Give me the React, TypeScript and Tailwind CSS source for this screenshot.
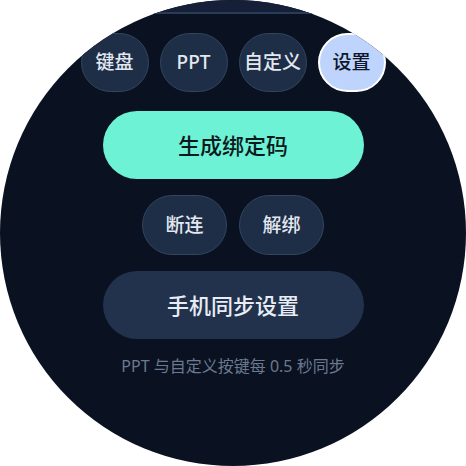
import React from "react";

const tabs = ["键盘", "PPT", "自定义", "设置"];

export default function App() {
  const active = "设置";
  return (
    <div className="w-[466px] h-[466px] bg-white" style={{ fontFamily: '"Noto Sans", "Noto Sans CJK SC", sans-serif' }}>
      <div className="w-full h-full rounded-full overflow-hidden bg-[#0a1120] flex flex-col items-center">
        {/* header scrolled off */}
        <div className="w-full h-[14px] shrink-0 bg-[#152038] border-b-2 border-[#2a3b57]" />

        <div className="mt-[19px] flex gap-[11px]">
          {tabs.map((t) => (
            <button
              key={t}
              className={`w-[68px] h-[59px] rounded-full flex items-center justify-center text-[19px] font-medium ${
                t === active
                  ? "bg-[#bfd4fd] text-[#0f172a] border-2 border-white"
                  : "bg-[#1f2e47] text-[#e2e8f0] border border-[#33455f]"
              }`}
            >
              {t}
            </button>
          ))}
        </div>

        <button className="mt-[19px] w-[261px] h-[68px] rounded-full bg-[#6ef2d5] text-[#0b1a1c] text-[22px] font-medium flex items-center justify-center">
          生成绑定码
        </button>

        <div className="mt-[16px] flex gap-[12px]">
          {["断连", "解绑"].map((t) => (
            <button
              key={t}
              className="w-[85px] h-[60px] rounded-full bg-[#1f2e47] border border-[#33455f] text-[#e2e8f0] text-[19px] font-medium flex items-center justify-center"
            >
              {t}
            </button>
          ))}
        </div>

        <button className="mt-[16px] w-[261px] h-[68px] rounded-full bg-[#22324d] text-[#e8edf5] text-[22px] font-medium flex items-center justify-center">
          手机同步设置
        </button>

        <p className="mt-[15px] text-[16px] text-[#6b7a90]">PPT 与自定义按键每 0.5 秒同步</p>
      </div>
    </div>
  );
}
